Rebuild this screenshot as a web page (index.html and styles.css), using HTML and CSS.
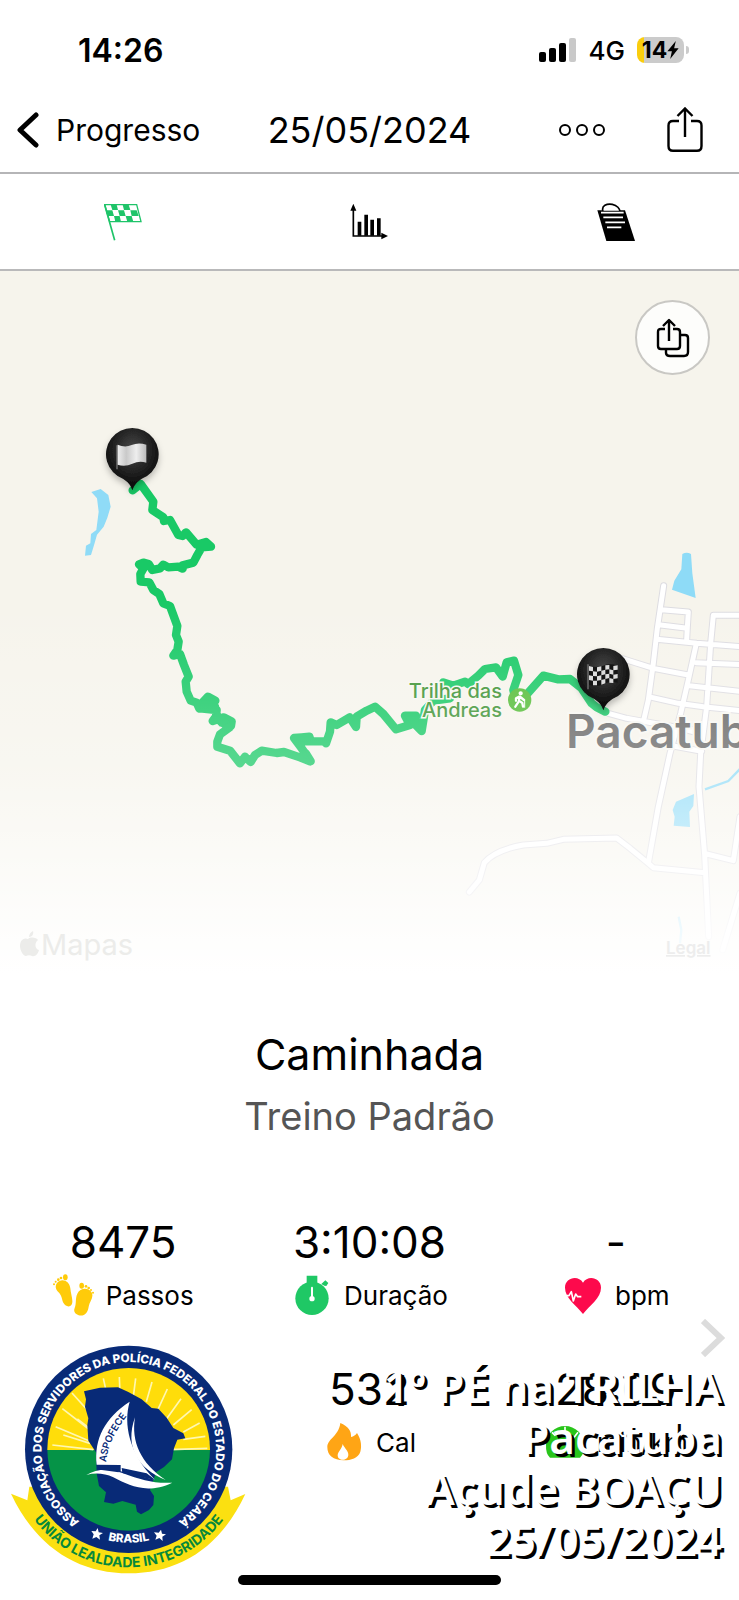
FILE: index.html
```html
<!DOCTYPE html>
<html lang="pt">
<head>
<meta charset="utf-8">
<meta name="viewport" content="width=device-width, initial-scale=1">
<title>Caminhada – 25/05/2024</title>
<link rel="stylesheet" href="styles.css">
</head>
<body>
<div class="screen">
  <div class="status">
    <span class="clock">14:26</span>
    <div class="status-right">
      <svg class="signal" viewBox="0 0 37 24" aria-hidden="true"><rect x="0" y="14" width="7" height="10" rx="2"/><rect x="10" y="10" width="7" height="14" rx="2"/><rect x="20" y="5" width="7" height="19" rx="2"/><rect x="30" y="0" width="7" height="24" rx="2" fill="#c9c9c9"/></svg>
      <span class="network">4G</span>
      <span class="battery"><span>14</span><svg class="bolt" viewBox="0 0 10 16" aria-hidden="true"><path d="M7.500 0L0 9.200H4L2.500 16L10 6.500H6Z"/></svg></span>
      <span class="nub"></span>
    </div>
  </div>

  <header class="nav">
    <button class="back" type="button">
      <svg viewBox="0 0 22 36" aria-hidden="true"><path d="M19 3L3 18L19 33" fill="none" stroke="#000" stroke-width="5" stroke-linecap="round" stroke-linejoin="round"/></svg>
      <span>Progresso</span>
    </button>
    <h1>25/05/2024</h1>
    <div class="actions">
      <button type="button" aria-label="Mais">
        <svg class="dots" viewBox="0 0 48 14" aria-hidden="true"><g fill="none" stroke="#000" stroke-width="2"><circle cx="7" cy="7" r="5"/><circle cx="24" cy="7" r="5"/><circle cx="41" cy="7" r="5"/></g></svg>
      </button>
      <button type="button" aria-label="Compartilhar">
        <svg class="share" viewBox="0 0 36 46" aria-hidden="true"><path d="M12 14H6Q1.500 14 1.500 18.500V39Q1.500 43.800 6 43.800H30Q34.500 43.800 34.500 39V18.500Q34.500 14 30 14H24M18 30V2M10.500 9L18 1.500L25.500 9" fill="none" stroke="#000" stroke-width="2.400"/></svg>
      </button>
    </div>
  </header>

  <nav class="tabs">
    <button type="button" aria-label="Resumo">
      <svg viewBox="0 0 114 114" aria-hidden="true"><g fill="none" stroke="#1fc469"><path d="M2 5L32 112" stroke-width="5"/><path d="M2 5H98L111 56H17Z" stroke-width="4"/></g><g fill="#1fc469"><path d="M20 5H38L42 21H25ZM56 5H74L79 21H60ZM6 22H25L30 39H10ZM42 22H60L65 39H47ZM79 22H98L104 39H83ZM30 39H47L51 56H34ZM65 39H83L88 56H70Z"/></g></svg>
    </button>
    <button type="button" aria-label="Gráficos">
      <svg viewBox="0 0 114 114" aria-hidden="true"><path d="M10 16V99H98" fill="none" stroke="#000" stroke-width="5"/><path d="M10 2L19 23H1ZM114 99L94 109V89ZM23 56H34V98H23ZM43 35H54V98H43ZM61 50H72V98H61ZM81 46H92V98H81Z"/></svg>
    </button>
    <button type="button" aria-label="Notas">
      <svg viewBox="0 0 114 114" aria-hidden="true"><path d="M1 22H84L114 114H28Z"/><path d="M18 25C12 8 30 1 46 4C60 7 69 17 69 26Z" fill="#fff" stroke="#000" stroke-width="5"/><g stroke="#fff" stroke-width="5"><path d="M12 29H80M19 43H78M25 58H84M30 73H73"/></g></svg>
    </button>
  </nav>

  <section class="map" aria-label="Mapa">
    <svg class="map-canvas" viewBox="0 271 739 704" role="img" aria-label="Percurso em Pacatuba">
      <defs>
        <linearGradient id="fade" x1="0" y1="600" x2="0" y2="975" gradientUnits="userSpaceOnUse"><stop offset="0" stop-color="#fff" stop-opacity="0"/><stop offset=".45" stop-color="#fff" stop-opacity=".28"/><stop offset=".68" stop-color="#fff" stop-opacity=".58"/><stop offset=".92" stop-color="#fff" stop-opacity=".91"/><stop offset="1" stop-color="#fff"/></linearGradient>
        <radialGradient id="pin" cx=".5" cy=".35" r=".6"><stop offset="0" stop-color="#484848"/><stop offset="1" stop-color="#080808"/></radialGradient>
        <linearGradient id="cloth"><stop offset="0" stop-color="#eee"/><stop offset=".3" stop-color="#c9c9c9"/><stop offset=".65" stop-color="#eee"/><stop offset="1" stop-color="#bbb"/></linearGradient>
        <filter id="shade" x="-30%" y="-30%" width="160%" height="170%"><feDropShadow dx="0" dy="12" stdDeviation="9" flood-opacity=".25"/></filter>
        <path id="roads" d="M671 137L652 265L640 370L625 480L610 545M665 209L745 216L742 262L740 300M662 255L742 265M650 298L770 310L900 320M900 226H820L812 310L800 500L782 640L777 740L794 945L806 1190M768 315L745 420L722 520L690 640L655 800L625 970M510 345L560 360L640 385L745 405M768 368L900 374M748 437L900 454M635 472L715 490L790 500L900 512M505 520L560 535L700 560L770 578M715 560L770 572M700 618L785 634M88 1056L118 1020L133 968Q165 930 250 915L320 910L370 898L530 894L570 925L625 970L640 983L795 998M800 942L880 962L900 830M900 1060L848 1230"/>
      </defs>
      <rect y="271" width="739" height="704" fill="#f6f4ec"/>
      <g transform="translate(70 410) scale(.33333)"><path d="M64 246L92 237L115 255L122 290L112 323L101 350L81 374L72 406L63 435L45 437L48 407L61 400L63 372L79 360L86 305L81 265Z" fill="#8fdbf7"/></g>
      <g transform="translate(440 540) scale(.33333)">
        <path d="M727 42Q740 34 753 42L757 100L767 174L696 149L703 122L724 88ZM708 785L762 762L760 798L748 815L750 861L701 857L704 830L698 810Z" fill="#8edbf7"/>
        <path d="M795 748L865 723L900 687M716 1130L724 1170L720 1210" fill="none" stroke="#8edbf7" stroke-width="7"/>
        <g fill="none" stroke-linejoin="round" stroke-linecap="round"><use href="#roads" stroke="#dddce1" stroke-width="21"/><use href="#roads" stroke="#fff" stroke-width="15"/></g>
      </g>
      <g transform="translate(100 540) scale(.33333)">
        <path fill="none" stroke="#19c966" stroke-width="25" stroke-linejoin="round" stroke-linecap="round" d="M98 -149L122 -168L160 -115L157 -90L190 -68L192 -57L210 -60L235 -15L248 -12L258 -23L290 14L318 6L333 20L305 22L292 45L280 68L248 76V86L235 80L205 82L190 74L180 85L157 90L146 72L130 68L117 73L130 86L121 102L122 125L148 127L160 150L178 162L190 190L210 198L232 258L228 285L236 305L232 330L220 347L240 342L252 375L266 410L257 425L260 455L272 482L290 488L298 506L310 485L324 470L346 482L330 495L345 500L300 505L350 510L348 530L338 543L372 532L395 544L393 558L365 546L388 563L360 583L352 605V620L390 632L420 670L435 650L452 666L465 645L485 632L530 639L552 636L600 652L630 664L617 640L632 664L605 625L582 594L605 592L628 590L632 602L600 603L672 604L678 610L690 575L692 547L710 555L749 532L768 561L770 530L800 512L825 500L850 522L888 568L930 555L915 527L948 527L935 540L945 553L965 573L975 510L1000 482L1050 475M1030 427L1060 437L1095 425L1105 432L1135 407L1155 387L1188 382L1208 410L1220 367L1242 362L1255 405L1240 450L1250 490L1270 475L1330 407L1375 418L1410 417L1445 445L1475 490L1490 502L1516 515"/>
        <path d="M300 480L345 475V515L300 510ZM345 505L390 545L360 560L340 540ZM600 590L630 590L632 605H600L632 665L610 650ZM905 520L955 520L970 575L935 555Z" fill="#19c966"/>
      </g>
      <g transform="translate(390 620) scale(.33333)"><circle cx="389" cy="240" r="35" fill="#55bd38"/><g fill="none" stroke="#fff" stroke-width="7" stroke-linecap="round" stroke-linejoin="round"><path d="M388 230L387 242L397 249L399 260M386 245L376 260M388 230L378 235V242M391 231L402 240"/><path d="M404 240V262" stroke-width="3"/><circle cx="392" cy="220" r="3"/></g></g>
      <g class="trail" text-anchor="end"><text x="502" y="698">Trilha das</text><text x="502" y="717">Andreas</text></g>
      <text class="town" x="566" y="748">Pacatuba</text>
      <rect y="600" width="739" height="375" fill="url(#fade)"/>
      <g class="attribution"><path d="M28 939C31 936 37 938 38 940C34 943 35 949 39 950C38 954 35 957 32 956C30 955 28 955 26 956C23 956 20 950 20 946C20 940 24 937 28 939ZM29 937C29 934 31 932 33 931C34 934 32 937 29 937Z"/><text x="41" y="955">Mapas</text></g>
      <text class="legal" x="666" y="954">Legal</text>
      <g transform="translate(70 410) scale(.33333)"><path filter="url(#shade)" fill="url(#pin)" d="M187 241Q183 222 160 207A79 79 0 1 1 214 207Q192 222 187 241Z"/><path d="M141 106V178" stroke="#777" stroke-width="4"/><path d="M143 104Q165 114 185 105T229 104V158Q208 151 187 161T143 164Z" fill="url(#cloth)"/></g>
      <g transform="translate(390 620) scale(.33333)"><path filter="url(#shade)" fill="url(#pin)" d="M640 271Q636 252 613 237A79 79 0 1 1 667 237Q645 252 640 271Z"/><path d="M594 133V208" stroke="#777" stroke-width="4"/><path d="M597 138Q620 145 640 137T683 137V188Q660 183 640 193T597 194Z" fill="#151515"/><path fill="#ddd" d="M597 138L609 141V154L597 152ZM621 142L634 139V152L621 155ZM646 136L658 135V148L646 149ZM670 138L683 136V149L670 151ZM609 154L621 155V169L609 168ZM634 152L646 149V163L634 166ZM658 148L670 151V164L658 161ZM597 166L609 168V182L597 180ZM621 169L634 166V180L621 182ZM646 163L658 161V174L646 177ZM670 164L683 162V175L670 177ZM609 182L621 182V196L609 196ZM634 180L646 177V190L634 194ZM658 174L670 177V189L658 188Z"/></g>
    </svg>
    <button class="map-share" type="button" aria-label="Compartilhar mapa">
      <svg viewBox="0 0 34 40" aria-hidden="true"><g fill="none" stroke="#000" stroke-width="2.400" stroke-linejoin="round"><path d="M9 11H5Q2 11 2 14V28Q2 31 5 31H21Q24 31 24 28V14Q24 11 21 11H17M13 23V2M7 8L13 2L19 8"/><path d="M24 17H29Q32 17 32 20V34Q32 38 28 38H14Q10 38 10 35V31"/></g></svg>
    </button>
  </section>

  <main class="summary">
    <h2>Caminhada</h2>
    <p class="plan">Treino Padrão</p>
    <div class="stats">
      <div class="stat"><span class="value">8475</span><span class="label">
        <svg viewBox="0 0 126 126" aria-hidden="true"><g fill="#ffcb0a"><path d="M12 27C25 12 49 19 52 43C53 59 61 78 57 89C53 101 38 99 32 88C26 76 27 63 15 53C7 45 6 35 12 27ZM73 59C80 43 104 38 115 54C125 69 109 83 107 98C104 117 94 128 77 124C65 120 61 112 65 102C71 87 66 74 73 59Z"/><ellipse cx="37" cy="10" rx="7" ry="9"/><circle cx="24" cy="12" r="4"/><circle cx="16" cy="17" r="4"/><circle cx="8" cy="23" r="3"/><circle cx="3" cy="31" r="3"/><ellipse cx="86" cy="35" rx="7" ry="9"/><circle cx="99" cy="37" r="4"/><circle cx="107" cy="42" r="4"/><circle cx="114" cy="48" r="3"/><circle cx="120" cy="56" r="3"/></g></svg>
        Passos</span></div>
      <div class="stat"><span class="value">3:10:08</span><span class="label">
        <svg viewBox="0 0 126 126" aria-hidden="true"><g fill="#1fc865"><circle cx="63" cy="73" r="50"/><path d="M47 5H79V30H47ZM91 30L103 19L112 27L106 36L100 35Z"/></g><path d="M63 41V73" stroke="#fff" stroke-width="6" stroke-linecap="round"/><circle cx="63" cy="74" r="8" fill="#fff"/></svg>
        Duração</span></div>
      <div class="stat"><span class="value">-</span><span class="label">
        <svg viewBox="0 0 126 126" aria-hidden="true"><path d="M63 120C42 92 9 73 9 41C9 10 49 2 63 26C77 2 117 10 117 41C117 73 84 92 63 120Z" fill="#fd0a4c"/><path d="M10 65H21L28 53L34 81L41 60L47 68H58" fill="none" stroke="#fff" stroke-width="5" stroke-linejoin="round"/></svg>
        bpm</span></div>
      <div class="stat"></div>
      <div class="stat"><span class="value">532</span><span class="label">
        <svg viewBox="0 0 126 126" aria-hidden="true"><path d="M52 6C75 15 86 31 84 48C92 47 98 42 102 36C116 57 116 79 112 92C106 111 84 118 62 118C31 118 13 103 13 79C13 53 47 46 52 6Z" fill="#ffa515"/><path d="M59 69C65 83 77 90 76 102C75 121 43 121 44 102C45 91 57 84 59 69Z" fill="#fff"/></svg>
        Cal</span></div>
      <div class="stat"><span class="value">28:09</span><span class="label">
        <svg viewBox="0 0 126 126" aria-hidden="true"><path d="M18 110Q5 99 6 72A57 57 0 0 1 120 72Q121 99 108 110Z" fill="#29c51b"/><path d="M63 17V31M24 34L34 44M102 34L80 62" stroke="#fff" stroke-width="5"/></svg>
        min/km</span></div>
    </div>
    <button class="next" type="button" aria-label="Próximo"><svg viewBox="0 0 24 38" aria-hidden="true"><path d="M2 2L20 19L2 36" fill="none" stroke="#dcdcdc" stroke-width="6"/></svg></button>

    <svg class="seal" viewBox="0 0 780 750" role="img" aria-label="ASPOFECE">
      <defs>
        <path id="ring" d="M386 620A262 262 0 1 1 387 620"/>
        <path id="base" d="M106 358A280 280 0 0 0 666 358"/>
        <path id="band" d="M32 358A354 354 0 0 0 740 358"/>
        <path id="sail" d="M318 397Q324 330 380 259"/>
        <clipPath id="disc"><circle cx="386" cy="358" r="244"/></clipPath>
      </defs>
      <path d="M33 491L82 511L88 470H684L692 511L736 492C660 655 535 730 386 730S110 655 33 491Z" fill="#fbe011"/>
      <circle cx="386" cy="358" r="311" fill="#082a77"/>
      <g clip-path="url(#disc)"><rect x="140" y="110" width="500" height="250" fill="#ffdd0a"/><rect x="140" y="360" width="500" height="250" fill="#059347"/>
      <path d="M157 345L280 359M167 290L270 334M187 236L270 300M216 189L280 260M310 145L320 190M358 141L360 190M407 145L400 200M456 156L439 215M502 177L474 238M543 206L500 266M575 239L520 285M599 279L550 306M616 319L550 328M622 355L510 359M232 267L265 292M190 315L270 340" stroke="#fff7b0" stroke-width="5"/></g>
      <path d="M252 184L300 173L354 172L385 186L425 208L455 234L475 236L500 263L520 294L550 310L556 325L532 329L522 355L516 388L492 411L468 427L450 480L462 498L460 525L447 540L423 553L411 545L407 524L367 513L340 521L312 516L318 487L297 468L290 430L288 367L265 332L262 285L265 265L255 230L258 208Z" fill="#082a77"/>
      <g fill="#fff"><path d="M389 215C370 280 386 370 465 449L362 424V405L290 404C282 325 315 264 389 215Z"/><path d="M405 262C393 335 422 400 497 450C414 416 373 352 405 262Z"/><path d="M259 435Q307 407 367 429C425 450 460 461 517 458C439 494 387 466 340 442Q300 424 259 435Z"/></g>
      <path d="M290 405L356 411V427L300 419ZM365 414L440 430L466 450L367 429Z" fill="#082a77"/>
      <text class="sail-text"><textPath href="#sail">ASPOFECE</textPath></text>
      <text class="ring-text" text-anchor="middle"><textPath href="#ring" startOffset="50%">ASSOCIAÇÃO DOS SERVIDORES DA POLÍCIA FEDERAL DO ESTADO DO CEARÁ</textPath></text>
      <text class="ring-text" text-anchor="middle"><textPath href="#base" startOffset="50%">BRASIL</textPath></text>
      <text class="band-text" text-anchor="middle"><textPath href="#band" startOffset="50%">UNIÃO LEALDADE INTEGRIDADE</textPath></text>
      <path d="M293 594L296 607L309 609L298 616L300 629L289 621L277 626L281 613L274 603L287 604ZM483 599L486 611L498 613L487 620L488 633L478 624L466 629L470 617L462 607L476 608Z" fill="#fff"/>
    </svg>
    <p class="caption">1º PÉ na TRILHA<br>Pacatuba<br>Açude BOAÇU<br>25/05/2024</p>
    <div class="home"></div>
  </main>
</div>
</body>
</html>
```

FILE: styles.css
```css
* { box-sizing: border-box; }

body {
  margin: 0;
  background: #fff;
  color: #000;
  font-family: Inter, "Liberation Sans", sans-serif;
}

h1, h2, p { margin: 0; font-weight: 400; }

button {
  padding: 0;
  border: 0;
  background: none;
  color: inherit;
  font: inherit;
  cursor: pointer;
}

svg { display: block; }

.screen {
  display: flex;
  flex-direction: column;
  min-height: 100vh;
  overflow: hidden;
}

.status {
  display: flex;
  align-items: center;
  justify-content: space-between;
  height: 88px;
  padding: 12px 50px 0 78px;
}

.clock { font-size: 32px; font-weight: 600; }

.status-right { display: flex; align-items: center; }

.signal { width: 37px; height: 24px; margin-right: 13px; }

.network { margin-right: 12px; font-size: 26px; font-weight: 500; }

.battery {
  display: flex;
  align-items: center;
  justify-content: center;
  width: 47px;
  height: 26px;
  border-radius: 8px;
  background: linear-gradient(90deg, #facd0e 7px, #cbcbcb 7px);
  font-size: 23px;
  font-weight: 700;
}

.bolt { width: 12px; height: 18px; }

.nub {
  width: 3px;
  height: 8px;
  margin-left: 2px;
  border-radius: 0 3px 3px 0;
  background: #cbcbcb;
}

.nav {
  display: grid;
  grid-template-columns: 1fr auto 1fr;
  align-items: center;
  height: 86px;
  border-bottom: 2px solid #b5b5b7;
}

.back {
  display: flex;
  align-items: center;
  gap: 17px;
  padding-left: 17px;
  font-size: 30px;
}

.back svg { width: 22px; height: 36px; }

.nav h1 { font-size: 36px; line-height: 44px; }

.actions {
  display: flex;
  align-items: center;
  justify-content: flex-end;
  gap: 61px;
  padding-right: 36px;
}

.dots { width: 48px; height: 14px; }

.share { width: 36px; height: 46px; }

.tabs {
  display: grid;
  grid-template-columns: repeat(3, 1fr);
  height: 97px;
  border-bottom: 2px solid #b9b9ba;
}

.tabs button {
  display: flex;
  align-items: center;
  justify-content: center;
}

.tabs svg { width: 38px; height: 38px; }

.map { position: relative; }

.map-canvas { width: 100%; height: auto; }

.trail {
  fill: #3d9334;
  stroke: #f8f7f0;
  stroke-width: 3px;
  paint-order: stroke;
  font-size: 20px;
  font-weight: 500;
}

.town {
  fill: #666;
  stroke: #f8f7f2;
  stroke-width: 4px;
  paint-order: stroke;
  font-size: 46px;
  font-weight: 600;
}

.attribution { fill: #ececea; font-size: 29px; }

.legal {
  fill: #ededed;
  font-size: 17px;
  font-weight: 600;
  text-decoration: underline;
}

.map-share {
  position: absolute;
  top: 29px;
  right: 29px;
  display: flex;
  align-items: center;
  justify-content: center;
  width: 75px;
  height: 75px;
  border: 2px solid #c9c8c4;
  border-radius: 50%;
  background: #fdfdfb;
}

.map-share svg { width: 34px; height: 40px; }

.summary {
  position: relative;
  display: flex;
  flex: 1;
  flex-direction: column;
  padding: 51px 0 15px;
  text-align: center;
}

.summary h2 { font-size: 43px; line-height: 56px; }

.plan {
  margin-top: 6px;
  color: #555;
  font-size: 38px;
  line-height: 56px;
}

.stats {
  display: grid;
  grid-template-columns: repeat(3, 1fr);
  row-gap: 44px;
  margin-top: 70px;
}

.stat {
  display: flex;
  flex-direction: column;
  align-items: center;
  gap: 3px;
}

.value { font-size: 44px; line-height: 56px; }

.label {
  display: flex;
  align-items: center;
  gap: 11px;
  height: 44px;
  font-size: 26px;
}

.label svg { width: 42px; height: 42px; }

.next {
  position: absolute;
  right: 14px;
  bottom: 243px;
}

.next svg { width: 24px; height: 38px; }

.seal {
  position: absolute;
  bottom: 20px;
  left: 0;
  width: 260px;
  height: 250px;
}

.ring-text { fill: #fff; font-size: 35px; font-weight: 800; }

.band-text { fill: #07883b; font-size: 42px; font-weight: 700; }

.sail-text { fill: #082a77; font-size: 29px; font-weight: 600; }

.caption {
  position: absolute;
  right: 17px;
  bottom: 35px;
  color: #fff;
  font-family: "Noto Sans", sans-serif;
  font-size: 44px;
  font-weight: 600;
  line-height: 51px;
  text-align: right;
  text-shadow: 3px 3px 0 #000;
}

.home {
  align-self: center;
  width: 263px;
  height: 10px;
  margin-top: auto;
  border-radius: 5px;
  background: #000;
}
```
